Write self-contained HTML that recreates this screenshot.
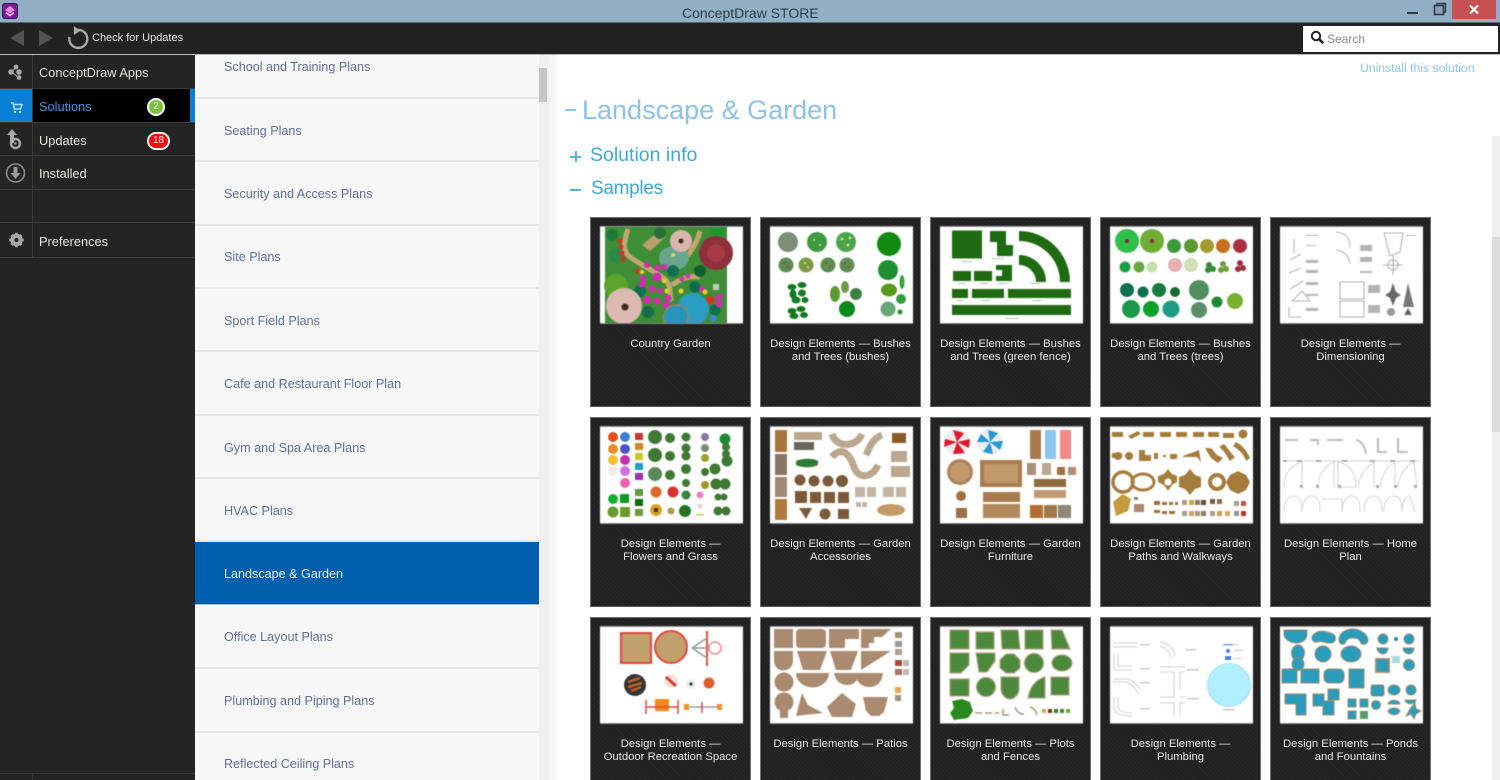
<!DOCTYPE html>
<html><head><meta charset="utf-8"><title>ConceptDraw STORE</title>
<style>
html,body{margin:0;padding:0;background:#fff;width:1500px;height:780px;overflow:hidden}
body{position:relative;font-family:"Liberation Sans",sans-serif}
.a{position:absolute}
.t{position:absolute;white-space:nowrap;filter:blur(.3px)}
#clip{position:absolute;left:0;top:0;width:1500px;height:780px;overflow:hidden}
#title{left:0;top:0;width:1500px;height:22px;background:#93afc3;border-bottom:1px solid #5d6a73}
#tb{left:0;top:23px;width:1500px;height:31px;background:#222;border-bottom:1px solid #bbb}
#side{left:0;top:55px;width:195px;height:725px;background:#242424}
.row{position:absolute;left:0;width:195px;border-bottom:1px solid #3a3a3a;box-sizing:border-box}
.row i{position:absolute;left:32px;top:0;bottom:0;width:1px;background:#3a3a3a}
.row span{position:absolute;left:39px;font-size:12.8px;color:#e6e6e0;white-space:nowrap;filter:blur(.3px)}
#list{left:195px;top:55px;width:344px;height:725px;background:#f7f7f7;overflow:hidden}
#list div{position:absolute;left:0;width:344px;height:63px;box-sizing:border-box;border-bottom:2px solid #e6e6e6;font-size:12.6px;color:#5f7098;padding-left:29px;filter:blur(.25px)}
.card{position:absolute;width:161px;height:190px;box-sizing:border-box;background:#242424;background-image:repeating-linear-gradient(45deg,#272727 0 1px,#212121 1px 3px);border:1px solid #6f6f6f;border-bottom-color:#555}
.card svg{position:absolute;left:9px;top:9px;width:143px;height:96px;background:#fff;filter:blur(.6px);box-shadow:0 1px 0 #8a8a8a,0 -1px 0 #999}
.card p{position:absolute;left:0;right:0;top:120px;margin:0;text-align:center;color:#e8e8e8;font-size:11.3px;line-height:13px;filter:blur(.3px)}
</style></head><body><div id="clip">

<div class="a" id="title"></div>
<svg class="a" style="left:2px;top:3px" width="16" height="16" viewBox="0 0 16 16"><rect x=".5" y=".5" width="15" height="15" rx="2.5" fill="#7a1f98" stroke="#3d1050"/><path d="M8 3l5 4-5 3.500L3 7z" fill="#f08ae8"/><path d="M4 9.500L8 12.500l4-3" fill="none" stroke="#f7c2f0" stroke-width="1.500"/></svg>
<div class="t" style="left:682px;top:5px;font-size:14px;color:#2c3b47">ConceptDraw STORE</div>
<div class="a" style="left:1407px;top:12px;width:11px;height:2px;background:#2d3a44"></div>
<svg class="a" style="left:1432px;top:2px" width="16" height="14" viewBox="0 0 16 14"><path d="M5 3V1.500h8.500V10H12" fill="none" stroke="#2d3a44" stroke-width="1.400"/><rect x="2.500" y="3.500" width="9" height="9" fill="#8aa3b6" stroke="#2d3a44" stroke-width="1.600"/></svg>
<div class="a" style="left:1452px;top:0;width:44px;height:19px;background:#c75050"></div>
<svg class="a" style="left:1468px;top:4px" width="12" height="11" viewBox="0 0 12 11"><path d="M2 1.500l8 8M10 1.500l-8 8" stroke="#fff" stroke-width="2.200"/></svg>

<div class="a" id="tb"></div>
<svg class="a" style="left:0;top:23px" width="190" height="31" viewBox="0 0 190 31"><path d="M24 7v16L10 15z" fill="#525252"/><path d="M39 7v16l14-8z" fill="#525252"/><path d="M75 6.500A9 9 0 1 1 69.500 13" fill="none" stroke="#a8a8a8" stroke-width="2.400" transform="translate(0,1)"/><path d="M74 3l6 5-6 4z" fill="#a8a8a8"/></svg>
<div class="t" style="left:92px;top:32px;font-size:11px;color:#e4e4e4">Check for Updates</div>
<div class="a" style="left:1303px;top:26px;width:195px;height:26px;background:#fff"></div>
<svg class="a" style="left:1310px;top:30px" width="15" height="15" viewBox="0 0 15 15"><circle cx="6" cy="6" r="4.200" fill="none" stroke="#222" stroke-width="2"/><path d="M9.200 9.200l4 4" stroke="#222" stroke-width="2.600"/></svg>
<div class="t" style="left:1327px;top:32px;font-size:12px;color:#8a8a8a">Search</div>

<div class="a" id="side">
 <div class="row" style="top:0;height:34px"><i></i><span style="top:10px">ConceptDraw Apps</span></div>
 <div class="row" style="top:34px;height:34px;background:#000"><b class="a" style="left:0;top:0;width:32px;height:33px;background:#0a7fd6"></b><b class="a" style="left:190px;top:0;width:5px;height:33px;background:#0a7fd6"></b><i></i><span style="top:10px;color:#3a97e8">Solutions</span></div>
 <div class="row" style="top:68px;height:33px"><i></i><span style="top:10px">Updates</span></div>
 <div class="row" style="top:101px;height:34px"><i></i><span style="top:10px">Installed</span></div>
 <div class="row" style="top:135px;height:33px"><i></i></div>
 <div class="row" style="top:168px;height:35px"><i></i><span style="top:11px">Preferences</span></div>
 <div class="a" style="left:0;top:718px;width:195px;height:1px;background:#333"></div>
 <div class="a" style="left:32px;top:718px;width:1px;height:7px;background:#333"></div>
</div>
<svg class="a" style="left:0;top:55px" width="32" height="205" viewBox="0 0 32 205">
 <g fill="#a6a6a6"><circle cx="11" cy="17" r="2.800"/><circle cx="16" cy="12" r="2.400"/><circle cx="19" cy="17" r="2.800"/><circle cx="19" cy="22.500" r="2.400"/><path d="M12 16l5-4M13 18l5 4" stroke="#a6a6a6"/></g>
 <g fill="#fff" opacity=".9"><path d="M11 48h2l1.500 6h6l1.500-4.500h-8" fill="none" stroke="#cfe8fa" stroke-width="1.500"/><circle cx="15" cy="57" r="1.200" fill="#cfe8fa"/><circle cx="20" cy="57" r="1.200" fill="#cfe8fa"/></g>
 <g fill="#a9a9a9"><path d="M12 74l5 6h-3v8h-4v-8H7z"/><circle cx="15.500" cy="88.500" r="4.500" fill="none" stroke="#a9a9a9" stroke-width="2.400"/><circle cx="15.500" cy="88.500" r="1.200"/></g>
 <circle cx="15.500" cy="118" r="9" fill="none" stroke="#8c8c8c" stroke-width="1.600"/><path d="M13.500 112h4v6h3l-5 6-5-6h3z" fill="#9a9a9a"/>
 <g transform="translate(16.500,185)"><circle r="4.800" fill="none" stroke="#a6a6a6" stroke-width="2.800"/><path d="M-1.400-7.200h2.800v14.400h-2.800zM-7.200-1.400h14.400v2.800h-14.400zM-6-4l2-2 10 10-2 2zM4-6l2 2-10 10-2-2z" fill="#a6a6a6"/><circle r="2" fill="#242424"/></g>
</svg>
<div class="a" style="left:147px;top:98px;width:18px;height:18px;box-sizing:border-box;border-radius:50%;background:#7cc23a;border:2px solid #f4f4f4;color:#fff;font-size:10px;line-height:14px;text-align:center">2</div>
<div class="a" style="left:147px;top:132px;width:23px;height:18px;box-sizing:border-box;border-radius:9px;background:#f40a0a;border:2px solid #f4eeee;color:#fff;font-size:10px;line-height:14px;text-align:center">18</div>

<div class="a" id="list">
<div style="top:-20px;height:64px;line-height:64px">School and Training Plans</div>
<div style="top:44px;line-height:64px">Seating Plans</div>
<div style="top:107px;line-height:64px;height:64px">Security and Access Plans</div>
<div style="top:171px;line-height:62px">Site Plans</div>
<div style="top:234px;line-height:64px">Sport Field Plans</div>
<div style="top:297px;line-height:64px;height:64px">Cafe and Restaurant Floor Plan</div>
<div style="top:361px;line-height:64px">Gym and Spa Area Plans</div>
<div style="top:424px;line-height:64px;height:63px">HVAC Plans</div>
<div style="top:487px;height:63px;background:#0060ae;color:#e6f1fa;border-bottom:1px solid #9fc0dc;line-height:65px">Landscape &amp; Garden</div>
<div style="top:551px;line-height:62px;height:63px">Office Layout Plans</div>
<div style="top:614px;line-height:64px;height:64px">Plumbing and Piping Plans</div>
<div style="top:678px;line-height:62px">Reflected Ceiling Plans</div>
</div>
<div class="a" style="left:539px;top:55px;width:9px;height:725px;background:#f0f0f0"></div>
<div class="a" style="left:539px;top:68px;width:8px;height:34px;background:#c6c6c6"></div>
<div class="a" style="left:548px;top:55px;width:12px;height:725px;background:linear-gradient(90deg,#f1f1f1,#fff)"></div>

<div class="t" style="left:1360px;top:61px;font-size:12.2px;color:#8cc4ea">Uninstall this solution</div>
<div class="a" style="left:565px;top:109px;width:11px;height:1.500px;background:#8cc4ea"></div>
<div class="t" style="left:582px;top:95px;font-size:27px;color:#8cc2ec;filter:blur(.35px)">Landscape &amp; Garden</div>
<div class="a" style="left:570px;top:156px;width:11px;height:1.500px;background:#52b2e4"></div>
<div class="a" style="left:575px;top:151px;width:1.500px;height:11px;background:#52b2e4"></div>
<div class="t" style="left:590px;top:144px;font-size:19.5px;color:#3ba8e0">Solution info</div>
<div class="a" style="left:570px;top:189px;width:11px;height:1.500px;background:#52b2e4"></div>
<div class="t" style="left:591px;top:178px;font-size:19px;letter-spacing:-.3px;color:#3ba8e0">Samples</div>
<div class="a" style="left:1492px;top:136px;width:8px;height:644px;background:#f0f0f0"></div>
<div class="a" style="left:1492px;top:237px;width:8px;height:195px;background:#dcdcdc"></div>

<!-- ROW 1 -->
<div class="card" style="left:590px;top:217px"><svg viewBox="0 0 143 96">
<rect x="5" y="0" width="122" height="96" fill="#3e8d37"/>
<path d="M28 2C24 14 22 24 30 30S50 42 62 50s6 18 10 24M100 4C96 20 84 36 70 46M72 58c8-6 18-10 28-8" fill="none" stroke="#c3a76e" stroke-width="5"/>
<path d="M42 18l16-13 8 5-16 14z" fill="#b9a070"/>
<circle cx="12" cy="8" r="6" fill="#1f7a3a"/><circle cx="16" cy="28" r="7" fill="#2a8a48"/><circle cx="118" cy="5" r="7" fill="#1f9a2a"/><circle cx="60" cy="6" r="6" fill="#2a6f3a"/>
<ellipse cx="74" cy="31" rx="15" ry="12" fill="#6aa58e"/><circle cx="73" cy="28" r="2" fill="#d8d86a"/>
<circle cx="116" cy="26" r="17" fill="#8f2f3c"/><circle cx="116" cy="26" r="9" fill="#a63d45"/>
<circle cx="81" cy="14" r="11" fill="#d9b6ad"/><circle cx="81" cy="14" r="2.500" fill="#3a2a20"/>
<g fill="#d8321e"><circle cx="20" cy="14" r="2.500"/><circle cx="21" cy="20" r="2.500"/><circle cx="22" cy="26" r="2.500"/><circle cx="23" cy="32" r="2.500"/><circle cx="37" cy="44" r="2.500"/><circle cx="110" cy="73" r="4.500"/></g>
<circle cx="73" cy="44" r="6" fill="#136f52"/><circle cx="100" cy="44" r="6" fill="#0d5f2d"/><circle cx="40" cy="64" r="6" fill="#0d7050"/><circle cx="95" cy="60" r="5.500" fill="#0d6a4a"/><circle cx="115" cy="83" r="5.500" fill="#0f6f50"/><circle cx="48" cy="85" r="6" fill="#146a4a"/>
<g fill="#d62ab0"><circle cx="47" cy="38" r="3"/><circle cx="57" cy="41" r="3"/><circle cx="64" cy="40" r="3"/><circle cx="57" cy="50" r="4.500"/><circle cx="43" cy="51" r="3"/><circle cx="42" cy="57" r="3.500"/><circle cx="52" cy="62" r="3.500"/><circle cx="60" cy="64" r="3"/><circle cx="47" cy="73" r="4"/><circle cx="57" cy="74" r="3.500"/><circle cx="68" cy="71" r="3.500"/><circle cx="66" cy="78" r="3.500"/><circle cx="102" cy="62" r="3"/><circle cx="119" cy="70" r="3.500"/><circle cx="119" cy="77" r="3.500"/><circle cx="82" cy="52" r="2.500"/><circle cx="88" cy="49" r="2.500"/></g>
<g fill="#ebcf2f"><circle cx="42" cy="45" r="2.200"/><circle cx="64" cy="54" r="2.200"/><circle cx="67" cy="64" r="2.500"/><circle cx="81" cy="64" r="2.500"/><circle cx="105" cy="65" r="2.500"/></g>
<circle cx="16" cy="59" r="12" fill="#5aa52a"/>
<circle cx="24" cy="79" r="18" fill="#dcbab1"/><circle cx="25" cy="80" r="3.500" fill="#3a2a20"/>
<circle cx="93" cy="82" r="16" fill="#2a9ec3"/><circle cx="76" cy="90" r="13" fill="#9c8550"/><circle cx="76" cy="90" r="11.500" fill="#2795be"/>
<rect x="113" y="57" width="6" height="6" fill="#c8c8c0"/><circle cx="113" cy="91" r="3.500" fill="#3a8ad0"/>
</svg><p>Country Garden</p></div>

<div class="card" style="left:760px;top:217px"><svg viewBox="0 0 143 96">
<circle cx="18" cy="15" r="10" fill="#7d8f78"/><circle cx="47" cy="15" r="10" fill="#3f9a40"/><circle cx="76" cy="15" r="10" fill="#4aa54c"/><circle cx="119" cy="17" r="12" fill="#118a11"/><circle cx="118" cy="43" r="10" fill="#1f9032"/><ellipse cx="119" cy="63" rx="8" ry="6.500" fill="#5a9a20"/><circle cx="131" cy="72" r="5" fill="#2fa03a"/><circle cx="118" cy="82" r="7.500" fill="#6aa878"/><circle cx="130" cy="85" r="2.500" fill="#1f9a1f"/><ellipse cx="132" cy="55" rx="2.500" ry="7" fill="#3aa040"/>
<g fill="#5a8f50"><circle cx="16" cy="38" r="7.500"/><circle cx="36" cy="38" r="7.500" fill="#7a9a45"/><circle cx="58" cy="38" r="7.500"/><circle cx="77" cy="38" r="7.500"/></g>
<g fill="#c03a4a"><circle cx="14" cy="36" r="1.200"/><circle cx="18" cy="40" r="1.200"/><circle cx="56" cy="36" r="1.200"/><circle cx="60" cy="40" r="1.200"/><circle cx="75" cy="36" r="1.200"/><circle cx="79" cy="40" r="1.200"/></g>
<g fill="#dfe8c0"><circle cx="72" cy="12" r="1.300"/><circle cx="78" cy="18" r="1.300"/><circle cx="80" cy="11" r="1.300"/><circle cx="44" cy="13" r="1"/><circle cx="50" cy="18" r="1"/><circle cx="35" cy="36" r="1"/><circle cx="38" cy="40" r="1"/></g>
<g fill="#137a22"><ellipse cx="22" cy="60" rx="4.500" ry="3"/><ellipse cx="32" cy="58" rx="4.500" ry="3"/><ellipse cx="23" cy="67" rx="3.500" ry="4.500"/><ellipse cx="32" cy="66" rx="4" ry="3.500"/><ellipse cx="26" cy="73" rx="4.500" ry="3.500"/><ellipse cx="35" cy="73" rx="3.500" ry="3"/><ellipse cx="22" cy="84" rx="4.500" ry="3"/><ellipse cx="31" cy="82" rx="4.500" ry="3"/><ellipse cx="24" cy="89" rx="4.500" ry="3"/><ellipse cx="34" cy="88" rx="4" ry="3"/></g>
<ellipse cx="65" cy="67" rx="5" ry="8" fill="#5a9a35"/><ellipse cx="75" cy="60" rx="4" ry="6" fill="#6a9a4a"/><circle cx="86" cy="67" r="6" fill="#3f7f45"/><circle cx="77" cy="82" r="8" fill="#0a8a1a"/>
</svg><p>Design Elements — Bushes<br>and Trees (bushes)</p></div>

<div class="card" style="left:930px;top:217px"><svg viewBox="0 0 143 96"><g fill="#1f6b12">
<rect x="12" y="3.500" width="30" height="28"/><path d="M50 4h16v14h7v11H57V15h-7z"/><rect x="13" y="44" width="18" height="10"/><rect x="34" y="44" width="18" height="10"/><path d="M56 38h16v16H56v-5h6v-6h-6z"/><rect x="12" y="62" width="16" height="9"/><rect x="32" y="62" width="32" height="9"/><rect x="68" y="62" width="63" height="9"/><rect x="12" y="78" width="119" height="10"/></g>
<path d="M79 9A46 46 0 0 1 125 55M79 33A22 22 0 0 1 101 55" fill="none" stroke="#1f6b12" stroke-width="10"/>
<g fill="#bbb"><rect x="22" y="34" width="10" height="1"/><rect x="52" y="31" width="12" height="1"/><rect x="18" y="56" width="8" height="1"/><rect x="40" y="56" width="8" height="1"/><rect x="58" y="56" width="10" height="1"/><rect x="90" y="56" width="10" height="1"/><rect x="17" y="73" width="6" height="1"/><rect x="42" y="73" width="8" height="1"/><rect x="92" y="73" width="10" height="1"/><rect x="65" y="91" width="14" height="1"/></g>
</svg><p>Design Elements — Bushes<br>and Trees (green fence)</p></div>

<div class="card" style="left:1100px;top:217px"><svg viewBox="0 0 143 96">
<circle cx="17" cy="14" r="12" fill="#2fc04a"/><circle cx="17" cy="14" r="2" fill="#8a2030"/><circle cx="42" cy="14" r="12" fill="#6fae35"/><circle cx="42" cy="14" r="2" fill="#8a2030"/>
<circle cx="64" cy="19" r="7" fill="#3a9a3a"/><circle cx="81" cy="19" r="7" fill="#5a9a30"/><circle cx="97" cy="19" r="7" fill="#a49a30"/><circle cx="113" cy="19" r="7" fill="#c7701f"/><circle cx="130" cy="19" r="7" fill="#a8303f"/>
<circle cx="15" cy="40" r="5.500" fill="#1aa040"/><circle cx="29" cy="40" r="5.500" fill="#6aa840"/><circle cx="42" cy="40" r="5.500" fill="#c6e0b0"/><circle cx="65" cy="38" r="7" fill="#e8b0b0"/><circle cx="81" cy="38" r="7" fill="#cfe0b8"/>
<g fill="#2f8a3a"><circle cx="99" cy="38" r="3"/><circle cx="103" cy="42" r="3"/><circle cx="98" cy="43" r="3"/></g><g fill="#6a9f3a"><circle cx="113" cy="37" r="3"/><circle cx="116" cy="42" r="3"/><circle cx="111" cy="43" r="3"/></g><g fill="#a82a3a"><circle cx="130" cy="36" r="3"/><circle cx="133" cy="41" r="3"/><circle cx="128" cy="42" r="3"/></g>
<circle cx="17" cy="63" r="7" fill="#0f6f50"/><circle cx="33" cy="65" r="5.500" fill="#0f6f50"/><circle cx="49" cy="63" r="7" fill="#1a7a40"/><circle cx="65" cy="65" r="5" fill="#146a30"/>
<circle cx="21" cy="82" r="9" fill="#1a9a4a"/><circle cx="41" cy="82" r="8" fill="#0ea02a"/><circle cx="61" cy="82" r="8.500" fill="#1f9a85"/>
<circle cx="89" cy="63" r="10" fill="#4f8f60"/><circle cx="89" cy="83" r="8" fill="#5a8f6a"/><circle cx="107" cy="75" r="5.500" fill="#1a8a3a"/><circle cx="125" cy="74" r="8" fill="#7ab030"/>
</svg><p>Design Elements — Bushes<br>and Trees (trees)</p></div>

<div class="card" style="left:1270px;top:217px"><svg viewBox="0 0 143 96"><g fill="none" stroke="#9a9a9a" stroke-width=".8">
<path d="M14 12v14M10 33l11-6M9 46l12-5M10 62l13-8M12 74l10-10 8 10zM9 80v10h13"/><path d="M56 5c10 1 14 6 14 15M56 23c9 1 13 6 14 14M60 55h24v17H60zM60 74h24v16H60zM104 6h19l-3 19-10 4z"/>
<circle cx="113" cy="38" r="5"/><path d="M113 28v20M103 38h20"/></g>
<g fill="#b4b4b4"><rect x="26" y="8" width="12" height="1"/><rect x="26" y="18" width="10" height="1"/><rect x="26" y="33" width="12" height="3"/><rect x="26" y="43" width="12" height="3"/><rect x="26" y="55" width="12" height="3"/><rect x="26" y="67" width="12" height="2"/><rect x="26" y="81" width="12" height="3"/><rect x="80" y="18" width="12" height="6"/><rect x="80" y="30" width="12" height="5"/><rect x="80" y="44" width="12" height="2"/><rect x="88" y="58" width="12" height="8"/><rect x="88" y="78" width="12" height="8"/><rect x="126" y="8" width="10" height="1"/></g>
<path d="M113 56l3 9 5 3-5 3-3 8-3-8-5-3 5-3z" fill="#666"/><path d="M128 56l6 24h-11z" fill="#777"/><circle cx="111" cy="85" r="4" fill="#999"/><path d="M128 81l4 7h-8z" fill="#666"/>
</svg><p>Design Elements —<br>Dimensioning</p></div>

<!-- ROW 2 -->
<div class="card" style="left:590px;top:417px"><svg viewBox="0 0 143 96">
<circle cx="13" cy="10" r="5" fill="#ee4a1a"/><circle cx="25" cy="10" r="5" fill="#3a80d0"/><circle cx="13" cy="22" r="5" fill="#f08a20"/><circle cx="25" cy="22" r="5" fill="#4a50c8"/><circle cx="13" cy="33" r="5" fill="#f5c030"/><circle cx="25" cy="33" r="5" fill="#c030b0"/><circle cx="13" cy="44" r="5" fill="#f2ebe3"/><circle cx="25" cy="44" r="5" fill="#d070e0"/><circle cx="25" cy="56" r="5" fill="#f060b0"/>
<rect x="35" y="6" width="8" height="7" fill="#c8382f"/><rect x="35" y="16" width="8" height="7" fill="#c88a20"/><rect x="35" y="26" width="8" height="7" fill="#c8c820"/><rect x="35" y="36" width="8" height="7" fill="#20a0c8"/><rect x="35" y="46" width="8" height="7" fill="#a030b0"/><rect x="35" y="62" width="8" height="7" fill="#5a9a3a"/><rect x="35" y="72" width="8" height="7" fill="#0a6a0a"/><rect x="35" y="82" width="8" height="7" fill="#6a9a3a"/>
<circle cx="13" cy="72" r="5" fill="#10b030"/><rect x="20" y="67" width="9" height="9" fill="#0a9a20"/><circle cx="13" cy="85" r="5.500" fill="#6a9a2a"/><rect x="20" y="80" width="10" height="10" fill="#6a9a2a"/>
<g fill="#3e7a34"><circle cx="55" cy="10" r="7"/><circle cx="70" cy="11" r="5"/><circle cx="55" cy="28" r="7"/><circle cx="70" cy="29" r="5"/><circle cx="55" cy="47" r="7" fill="#5a8a5a"/><circle cx="70" cy="48" r="5"/><circle cx="86" cy="10" r="4.500"/><circle cx="86" cy="21" r="4.500"/><circle cx="86" cy="29" r="4.500"/><circle cx="86" cy="42" r="5"/><circle cx="86" cy="56" r="4"/><circle cx="86" cy="68" r="4.500"/><circle cx="85" cy="84" r="6" fill="#137a22"/><circle cx="105" cy="10" r="4" fill="#8878a0"/><circle cx="105" cy="21" r="4" fill="#7a8f70"/><circle cx="105" cy="31" r="4" fill="#a0a030"/><circle cx="105" cy="45" r="4"/><circle cx="105" cy="58" r="4" fill="#a09a20"/><circle cx="125" cy="12" r="5.500" fill="#1f8a3a"/><circle cx="126" cy="20" r="4"/><circle cx="126" cy="27" r="4"/><circle cx="127" cy="34" r="5.500"/><circle cx="115" cy="42" r="5.500"/><circle cx="116" cy="57" r="5.500"/><circle cx="125" cy="57" r="5.500"/><circle cx="118" cy="70" r="3.500"/><circle cx="124" cy="70" r="3.500"/><circle cx="118" cy="84" r="4.500"/><circle cx="126" cy="84" r="4.500"/></g>
<circle cx="56" cy="65" r="5.500" fill="#e4662a"/><circle cx="73" cy="65" r="5.500" fill="#d93030"/><circle cx="85" cy="68" r="2" fill="#1aa040"/><circle cx="56" cy="83" r="6" fill="#d8a020"/><circle cx="56" cy="83" r="2" fill="#402010"/><circle cx="71" cy="84" r="3.500" fill="#a0a050"/><circle cx="100" cy="68" r="3.500" fill="#f080c8"/><circle cx="100" cy="79" r="2.500" fill="#f7c8d8"/><rect x="96" y="87" width="8" height="1.500" fill="#d8c040"/>
<g fill="#c0302a"><circle cx="84" cy="84" r="1.500"/></g>
</svg><p>Design Elements —<br>Flowers and Grass</p></div>

<div class="card" style="left:760px;top:417px"><svg viewBox="0 0 143 96">
<rect x="5" y="3" width="12" height="22" fill="#a8763a"/><rect x="5" y="27" width="12" height="21" fill="#8a7664"/><rect x="5" y="50" width="12" height="20" fill="#a08a76"/><rect x="5" y="72" width="12" height="21" fill="#b07a3e"/>
<rect x="24" y="5" width="28" height="8" fill="#bba68e"/><rect x="24" y="15" width="20" height="8" fill="#6a665e"/><path d="M26 34c6-3 18-3 22 0v4c-6 3-16 3-22 0z" fill="#2f7a34"/>
<path d="M62 7c4 14 24 14 30 0" fill="none" stroke="#bba68e" stroke-width="7"/><path d="M112 8c-10 4-12 12-16 20" fill="none" stroke="#bba68e" stroke-width="7"/><path d="M62 30c10-12 18-2 22 10s18 12 24-2" fill="none" stroke="#bba68e" stroke-width="7"/>
<rect x="122" y="6" width="14" height="10" fill="#8a5a24"/><rect x="121" y="24" width="16" height="11" fill="#bba68e"/><rect x="121" y="39" width="19" height="11" fill="#bba68e"/>
<g fill="#7a5a3a"><circle cx="30" cy="53" r="5.500"/><circle cx="44" cy="54" r="5.500"/><circle cx="58" cy="54" r="5.500"/><circle cx="72" cy="54" r="6"/><rect x="25" y="64" width="12" height="12"/><rect x="40" y="65" width="11" height="11"/><rect x="54" y="65" width="11" height="11"/><rect x="68" y="65" width="11" height="11"/><path d="M29 81h13l-6 11z"/><circle cx="55" cy="87" r="5.500"/><rect x="68" y="82" width="11" height="10"/></g>
<g fill="#c4b4a4"><rect x="85" y="60" width="10" height="10"/><rect x="97" y="60" width="9" height="10"/><rect x="113" y="60" width="11" height="10"/><rect x="126" y="60" width="10" height="10"/><rect x="86" y="75" width="5" height="5"/><rect x="92" y="75" width="5" height="5"/></g>
<ellipse cx="121" cy="83" rx="14" ry="6" fill="#c49a68"/>
</svg><p>Design Elements — Garden<br>Accessories</p></div>

<div class="card" style="left:930px;top:417px"><svg viewBox="0 0 143 96">
<circle cx="17" cy="15" r="13" fill="#eee"/><path d="M17 15l-4-12 11 3zM17 15l13-3-1 9zM17 15l8 11-12 1zM17 15L4 20l1-8z" fill="#e0182a"/>
<circle cx="50" cy="15" r="13" fill="#eee"/><path d="M50 15l-2-12 10 3zM50 15l13-1-3 9zM50 15l3 12-10-2zM50 15L37 15l4-8z" fill="#2398d4"/>
<rect x="90" y="3" width="11" height="29" fill="#a87c50"/><rect x="105" y="3" width="11" height="29" fill="#8cc4ec"/><rect x="120" y="3" width="11" height="29" fill="#f08a86"/>
<circle cx="20" cy="45" r="13" fill="#b08456"/><circle cx="20" cy="45" r="10" fill="#c09a6c"/>
<rect x="40" y="33" width="42" height="27" fill="#a87c50"/><rect x="44" y="37" width="34" height="19" fill="#c09a6c"/>
<rect x="87" y="36" width="9" height="12" fill="#a8917a"/><rect x="102" y="36" width="9" height="12" fill="#bba68e"/><rect x="117" y="40" width="8" height="8" fill="#a07040"/><rect x="128" y="40" width="8" height="8" fill="#b09070"/>
<circle cx="21" cy="69" r="5" fill="#9c7040"/><rect x="43" y="65" width="37" height="10" fill="#a87c50"/><rect x="43" y="77" width="37" height="14" fill="#b08a5c"/><rect x="16" y="81" width="11" height="10" fill="#9c7040"/>
<rect x="94" y="52" width="32" height="8" fill="#8f6a3c"/><rect x="94" y="63" width="32" height="8" fill="#c09a74"/><rect x="90" y="78" width="13" height="13" fill="#b06f30"/><rect x="104" y="78" width="13" height="13" fill="#a07848"/><rect x="118" y="78" width="13" height="13" fill="#8f8674"/>
</svg><p>Design Elements — Garden<br>Furniture</p></div>

<div class="card" style="left:1100px;top:417px"><svg viewBox="0 0 143 96"><g fill="#a57c3c">
<rect x="2" y="5" width="11" height="5"/><path d="M18 9l10-5 3 3-10 5z"/><rect x="33" y="5" width="11" height="5"/><rect x="50" y="5" width="11" height="5"/><rect x="66" y="5" width="11" height="5"/><rect x="83" y="5" width="11" height="5"/><rect x="98" y="5" width="11" height="5"/><rect x="113" y="6" width="11" height="5"/><circle cx="133" cy="7" r="4.500"/>
<path d="M2 26h10v5H2z"/><circle cx="8" cy="29" r="4"/><circle cx="19" cy="29" r="4"/><path d="M29 23h6v5h6v6H29z"/><rect x="44" y="26" width="4" height="6"/><rect x="53" y="28" width="3" height="2"/><rect x="60" y="27" width="7" height="5"/><path d="M73 29l16-6 2 12-4-5H73z"/><path d="M95 21h6l6 7 6 3-5 5-7-5zM96 30l-6 4"/><path d="M109 20c6 4 8 10 11 14l5-4c-4-3-6-8-11-13zM123 19c5 3 11 8 13 15l4-3c-3-7-8-13-14-16z"/>
<circle cx="13" cy="55" r="10" fill="none" stroke="#a57c3c" stroke-width="3.500"/><ellipse cx="33" cy="55" rx="11" ry="8" fill="none" stroke="#a57c3c" stroke-width="3"/><path d="M58 42l4 5 5 2v6l-5 3-4 6-4-6-6-3v-6l6-2z"/><path d="M80 42l5 6 6 2v10l-6 2-5 6-5-6-6-2V50l6-2z"/><circle cx="107" cy="55" r="9"/><path d="M128 44l8 4 4 7-4 8-8 4-8-4-4-8 4-7z"/></g>
<circle cx="58" cy="55" r="3.500" fill="#fff"/><circle cx="107" cy="55" r="5" fill="#fff"/>
<path d="M3 75l10-8 8 5-3 12-12 5z" fill="#c89a3e"/><rect x="24" y="70" width="4" height="3" fill="#8a8a7a"/><rect x="24" y="77" width="10" height="8" fill="#a8896a"/>
<g fill="#9c7040"><rect x="44" y="74" width="6" height="4"/><rect x="52" y="75" width="5" height="3"/><rect x="59" y="75" width="4" height="3"/><rect x="65" y="75" width="3" height="3"/><rect x="44" y="83" width="6" height="3"/><rect x="52" y="84" width="5" height="3"/><rect x="59" y="84" width="6" height="3"/></g>
<g fill="#a8a090"><rect x="72" y="73" width="5" height="5"/><rect x="79" y="73" width="5" height="5" fill="#c8a050"/><rect x="85" y="73" width="5" height="5" fill="#8a7a66"/><rect x="91" y="73" width="5" height="5" fill="#6a5030"/><rect x="72" y="84" width="5" height="5"/><rect x="79" y="84" width="5" height="5" fill="#c8a860"/><rect x="85" y="84" width="5" height="5" fill="#aa9878"/><rect x="91" y="84" width="5" height="5" fill="#8a7a66"/><rect x="100" y="72" width="5" height="5" fill="#7a5a4a"/><rect x="107" y="72" width="5" height="5" fill="#8a6a4a"/><rect x="100" y="84" width="5" height="5"/><rect x="107" y="84" width="5" height="5" fill="#c8a050"/><rect x="115" y="84" width="5" height="5" fill="#d0a860"/><rect x="124" y="74" width="5" height="5"/><rect x="131" y="74" width="5" height="5" fill="#b5544a"/><rect x="124" y="84" width="5" height="5" fill="#8a9a8a"/><rect x="131" y="84" width="5" height="5" fill="#a83a2a"/></g>
</svg><p>Design Elements — Garden<br>Paths and Walkways</p></div>

<div class="card" style="left:1270px;top:417px"><svg viewBox="0 0 143 96"><g fill="none" stroke="#bdbdbd" stroke-width="2">
<path d="M5 13h13M30 13h8v5M47 13h16M76 13c6 1 9 7 10 14M98 11v14h9M118 11v14h10"/></g>
<g fill="none" stroke="#c8c8c8" stroke-width=".8"><path d="M4 34h135" stroke-width="1.500" stroke="#ddd"/><path d="M4 60c0-15 8-22 18-25M22 36v24M38 60c0-14 8-22 16-25v25M58 60h18c0-15-6-22-18-25zM78 60c2-14 10-22 16-24v24M100 60c2-14 8-22 15-24v24M118 60c2-14 8-22 16-24l3 24M4 85c0-10 4-16 10-16s8 6 8 16c0-10 4-16 10-16s8 6 8 16M42 72h20v13M62 85c0-10 4-16 10-16s8 6 8 16M84 85c0-10 4-16 10-16s8 6 8 16M104 85c0-10 4-16 10-16s8 6 8 16c0-10 4-16 8-16l5 16"/></g>
<g fill="#aaa"><rect x="3" y="33" width="4" height="2"/><rect x="17" y="33" width="5" height="2"/><rect x="36" y="33" width="5" height="2"/><rect x="62" y="33" width="5" height="2"/><rect x="90" y="33" width="5" height="2"/><rect x="110" y="33" width="5" height="2"/><rect x="130" y="33" width="5" height="2"/><rect x="20" y="58" width="3" height="3"/><rect x="36" y="58" width="3" height="3"/><rect x="58" y="58" width="3" height="3"/><rect x="96" y="58" width="3" height="3"/><rect x="114" y="58" width="3" height="3"/><rect x="134" y="58" width="3" height="3"/></g>
</svg><p>Design Elements — Home<br>Plan</p></div>

<!-- ROW 3 -->
<div class="card" style="left:590px;top:617px"><svg viewBox="0 0 143 96">
<rect x="21" y="6" width="30" height="30" fill="#c2a06c" stroke="#e0483a" stroke-width="2"/><circle cx="71" cy="20" r="16" fill="#c2a06c" stroke="#e0483a" stroke-width="2"/>
<path d="M107 4v35" stroke="#e0483a" stroke-width="2"/><path d="M92 21l15-10M92 21l15 10M92 21h15" stroke="#999" stroke-width="1.500" fill="none"/><circle cx="115" cy="21" r="6" fill="#fff" stroke="#e88" stroke-width="1.500"/>
<circle cx="35" cy="58" r="11" fill="#333"/><path d="M28 55l12-4M28 60l14-4M31 64l10-4" stroke="#c8602a" stroke-width="2.500"/>
<circle cx="71" cy="54" r="7" fill="#f4e4e0"/><path d="M66 50l10 9" stroke="#d83a2a" stroke-width="3"/><circle cx="91" cy="57" r="5" fill="#eee"/><circle cx="91" cy="57" r="1.500" fill="#222"/><circle cx="109" cy="56" r="5.500" fill="#e0602a"/>
<rect x="55" y="72" width="14" height="12" fill="#f08a1a"/><path d="M47 80h31M46 73v14M78 73v14" stroke="#e0483a" stroke-width="1.500" fill="none"/><path d="M87 80h32" stroke="#999" stroke-width="1.500"/><rect x="84" y="77" width="5" height="6" fill="#f09020"/><rect x="117" y="77" width="5" height="6" fill="#f09020"/><path d="M102 75v11" stroke="#e0483a" stroke-width="1.500"/>
</svg><p>Design Elements —<br>Outdoor Recreation Space</p></div>

<div class="card" style="left:760px;top:617px"><svg viewBox="0 0 143 96"><g fill="#ab8b70">
<rect x="4" y="2" width="19" height="19"/><rect x="26" y="2" width="30" height="19" rx="4"/><path d="M59 2h30v10H75v9H59z"/><path d="M91 2h30l-9 8h-8v6h-5v5h-8z"/>
<path d="M4 24h19v10a9.500 9.500 0 0 1-19 0z"/><path d="M27 24h30l-7 19H33z"/><path d="M60 24h28l-7 19H66z"/><path d="M91 24h30l-30 19z"/>
<circle cx="14" cy="55" r="9.500"/><path d="M26 46h33a16 14 0 0 1-33 0z"/><path d="M64 46h25c-1 8-5 12-12 12s-12-5-13-12z"/><path d="M85 46h28c-1 9-6 14-14 14s-13-6-14-14z"/>
<circle cx="14" cy="75" r="9.500"/><rect x="10" y="82" width="8" height="9"/><path d="M32 66l6 12 15 8-27 3z"/><path d="M72 66l14 11-4 13H62l-5-10z"/><path d="M93 70h25l-4 15-5 4h-8l-5-5z"/></g>
<g><rect x="125" y="5" width="7" height="6" fill="#a89078"/><rect x="125" y="14" width="7" height="6" fill="#999"/><rect x="125" y="22" width="7" height="6" fill="#b0a090"/><rect x="125" y="33" width="7" height="6" fill="#a84a3a"/><rect x="133" y="33" width="6" height="6" fill="#bbb"/><rect x="125" y="42" width="7" height="6" fill="#a87060"/><rect x="133" y="42" width="6" height="6" fill="#bbb"/><rect x="125" y="60" width="6" height="6" fill="#e0a848"/><rect x="125" y="68" width="6" height="6" fill="#9a9080"/></g>
</svg><p>Design Elements — Patios</p></div>

<div class="card" style="left:930px;top:617px"><svg viewBox="0 0 143 96"><g fill="#4a8a3a" stroke="#b3a086" stroke-width="1.200">
<rect x="10" y="3" width="19" height="19"/><rect x="36" y="5" width="18" height="17"/><path d="M61 3h17l2 19H62z"/><rect x="85" y="3" width="18" height="19"/><path d="M111 3h11l8 19h-18z"/>
<path d="M10 26h19v12l-8 8H10z"/><path d="M36 26h19v8l-8 11h-8z"/><path d="M66 27h8l6 6v8l-6 5h-8l-6-5v-8z"/><circle cx="94" cy="36" r="9.500"/><ellipse cx="122" cy="36" rx="10" ry="8"/>
<rect x="10" y="52" width="19" height="17"/><circle cx="46" cy="60" r="9.500"/><path d="M61 50h18v11a9 11 0 0 1-18 0z"/><path d="M105 50v21H88c2-11 7-18 17-21z"/><rect x="111" y="50" width="18" height="18"/></g>
<path d="M12 74l10-2 8 3 3 9-5 7-14 2-4-7 4-5z" fill="#2a8a1f"/>
<path d="M35 86h7M45 86h7M55 86h4M63 82v6h6M75 80c2 5 4 7 9 7M90 80c4 1 6 4 7 8" stroke="#a8927a" stroke-width="1.500" fill="none"/>
<rect x="102" y="82" width="4" height="4" fill="#c8a860"/><rect x="108" y="82" width="4" height="4" fill="#6a3a1a"/><rect x="114" y="82" width="4" height="4" fill="#3a7a2a"/><rect x="120" y="82" width="4" height="4" fill="#3a8a2a"/><rect x="126" y="82" width="4" height="4" fill="#6aaa2a"/>
</svg><p>Design Elements — Plots<br>and Fences</p></div>

<div class="card" style="left:1100px;top:617px"><svg viewBox="0 0 143 96"><g fill="none" stroke="#ddd" stroke-width="1.500">
<path d="M3 16h25M3 20h25M4 27v16h18M8 27v12h14M3 55h12c5 0 9 5 14 12M3 52h14c5 0 8 5 13 10M4 70v10c0 6 5 9 18 9M8 70v9c0 5 3 6 14 7M50 15c8 1 13 6 15 14M50 19c6 1 9 5 11 11M50 40h25M50 45h14v17M75 45h-5v17M50 70h14v-8M50 76h14v14M75 70h-5M75 76h-5v14M64 62v8"/></g>
<g fill="#c8c8c8"><rect x="30" y="17" width="10" height="1.500"/><rect x="30" y="41" width="10" height="1.500"/><rect x="30" y="55" width="10" height="1.500"/><rect x="30" y="81" width="10" height="1.500"/><rect x="76" y="22" width="10" height="1.500"/><rect x="77" y="42" width="12" height="1.500"/><rect x="77" y="71" width="12" height="1.500"/><rect x="113" y="82" width="12" height="1.500"/><rect x="124" y="17" width="4" height="1"/><rect x="124" y="23" width="9" height="1"/><rect x="124" y="31" width="8" height="1"/></g>
<rect x="113" y="17" width="10" height="1.500" fill="#6a9af0"/><circle cx="118" cy="24" r="2" fill="#4a7ae8"/><rect x="115" y="29" width="6" height="4" fill="#4a7ae8"/>
<circle cx="119" cy="58" r="21.500" fill="#b0efff" stroke="#a8dce8"/>
</svg><p>Design Elements —<br>Plumbing</p></div>

<div class="card" style="left:1270px;top:617px"><svg viewBox="0 0 143 96"><g fill="#2a9cbc" stroke="#9a8a68" stroke-width="1">
<path d="M4 3h23v4c0 6-5 9-11 9S4 12 4 7z"/><path d="M34 7c5-5 14-2 19 0 4 3 3 9-3 9-7 0-9-3-12-1-6 1-8-5-4-8z"/><path d="M59 13c0-8 8-11 14-11s14 4 15 11c0 5-7 6-8 1-2-4-12-4-14 0-1 5-7 4-7-1z"/>
<ellipse cx="18" cy="26" rx="6.500" ry="8"/><ellipse cx="18" cy="37" rx="6" ry="6.500"/><circle cx="43" cy="27" r="8"/><ellipse cx="71" cy="27" rx="10" ry="8"/>
<rect x="2" y="42" width="15" height="14"/><rect x="21" y="42" width="18" height="14"/><rect x="44" y="42" width="20" height="14" rx="5"/><rect x="69" y="42" width="15" height="19"/>
<path d="M5 67h21v21H16V77H5z"/><path d="M33 67h11v7h10v14H43V79H33z"/><rect x="48" y="62" width="11" height="11"/>
<circle cx="103" cy="12" r="5"/><path d="M97 21h11c0 4-3 6-5 6s-6-2-6-6z"/><rect x="96" y="32" width="13" height="13" stroke-width="1.800"/><circle cx="129" cy="12" r="5"/><path d="M123 21h11c0 4-3 6-5 6s-6-2-6-6z"/><circle cx="129" cy="38" r="5.500"/>
<rect x="91" y="58" width="13" height="11" rx="2"/><ellipse cx="114" cy="63" rx="6" ry="5"/><circle cx="131" cy="63" r="5"/><path d="M108 77c1-5 11-5 12 0zM125 73h11c-1 5-10 5-11 0zM108 84c2 5 10 5 12 0-2-4-10-4-12 0z"/><circle cx="96" cy="78" r="4.500"/><path d="M130 82l5-6 1 6 5 2-5 3-2 5-3-5-5 2z"/>
<rect x="68" y="72" width="8" height="8"/><rect x="80" y="72" width="8" height="8"/><rect x="68" y="84" width="8" height="8"/></g>
<rect x="80" y="84" width="8" height="8" fill="#5a9a6a"/><circle cx="116" cy="12" r="2" fill="#1a8aa8"/><rect x="112" y="29" width="8" height="7" fill="#a8dce0"/>
</svg><p>Design Elements — Ponds<br>and Fountains</p></div>
</div></body></html>
